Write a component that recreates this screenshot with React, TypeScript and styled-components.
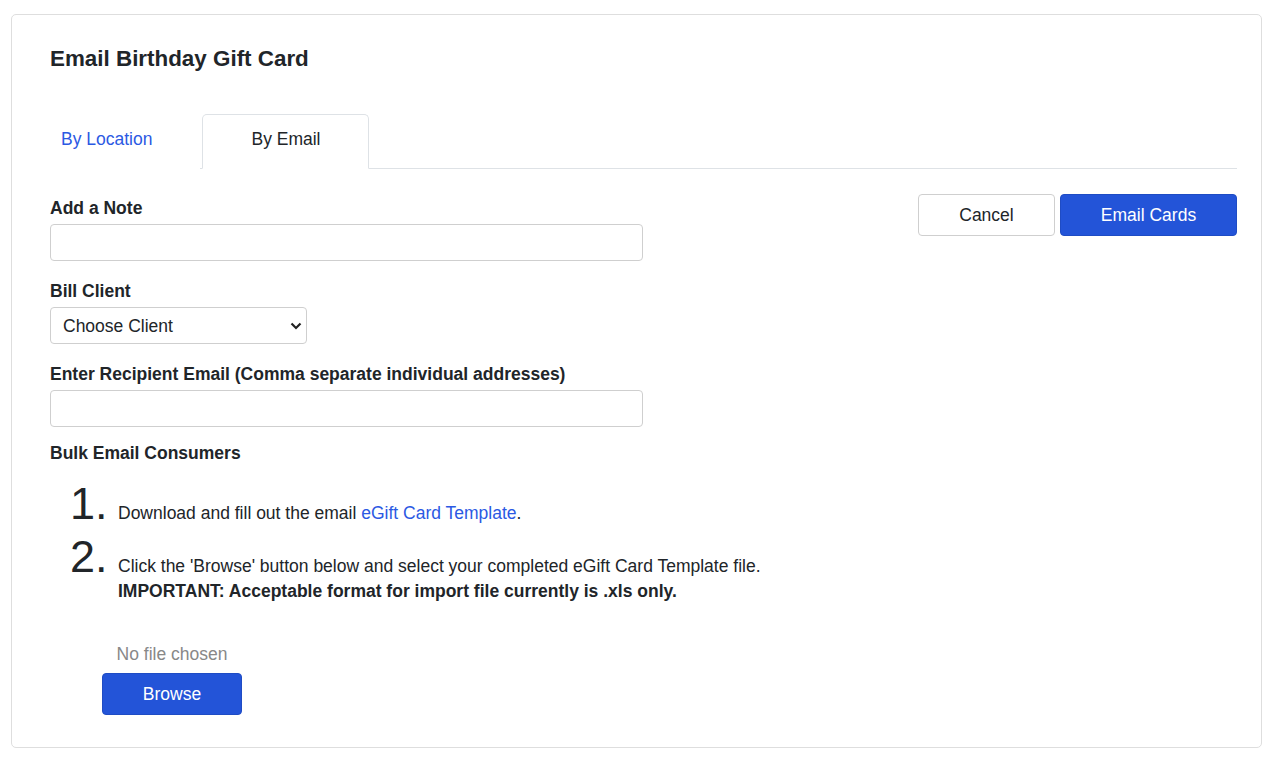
import React from "react";
import styled, { createGlobalStyle } from "styled-components";

const GlobalStyle = createGlobalStyle`
  html, body { margin: 0; padding: 0; background: #ffffff; }
  body {
    font-family: "Liberation Sans", Arial, sans-serif;
    font-size: 17.5px;
    color: #212529;
  }
  * { box-sizing: border-box; }
`;

const Page = styled.div`
  padding: 14px 22px 13px 11px;
`;

const Card = styled.section`
  border: 1px solid #dedede;
  border-radius: 5px;
  padding: 30px 24px 32px 20px;
  background: #fff;
`;

const Title = styled.h1`
  margin: 0 0 0 18px;
  font-size: 22.4px;
  line-height: 27px;
  font-weight: 700;
  color: #212529;
`;

const TabList = styled.div`
  margin-top: 42px;
  display: flex;
  gap: 2px;
  border-bottom: 1px solid #dee2e6;
`;

const Tab = styled.button<{ $active?: boolean }>`
  font-family: inherit;
  font-size: 17.5px;
  line-height: 48px;
  padding: 0 47px 5px 48px;
  margin-bottom: -1px;
  background: #fff;
  cursor: pointer;
  color: ${(p) => (p.$active ? "#212529" : "#2b59e3")};
  border: 1px solid ${(p) => (p.$active ? "#dee2e6" : "transparent")};
  border-bottom-color: ${(p) => (p.$active ? "#fff" : "transparent")};
  border-radius: 5px 5px 0 0;
  &:first-child { margin-left: -20px; }
`;

const Content = styled.div`
  display: flex;
  align-items: flex-start;
  padding: 25px 0 0 18px;
`;

const Form = styled.div`
  width: 593px;
  padding-top: 3px;
`;

const Actions = styled.div`
  margin-left: auto;
  display: flex;
  gap: 5px;
`;

const Button = styled.button<{ $variant?: "primary" | "default" }>`
  font-family: inherit;
  font-size: 17.5px;
  height: 42px;
  border-radius: 4px;
  cursor: pointer;
  padding: 0;
  background: ${(p) => (p.$variant === "primary" ? "#2354d8" : "#fff")};
  color: ${(p) => (p.$variant === "primary" ? "#fff" : "#212529")};
  border: 1px solid ${(p) => (p.$variant === "primary" ? "#1f4cc4" : "#cfcfcf")};
`;

const Field = styled.div`
  margin-bottom: 19px;
`;

const Label = styled.label`
  display: block;
  font-weight: 700;
  font-size: 17.5px;
  line-height: 22px;
  margin-bottom: 5px;
`;

const TextInput = styled.input`
  display: block;
  width: 593px;
  height: 37px;
  border: 1px solid #cfcfcf;
  border-radius: 4px;
  font-family: inherit;
  font-size: 17.5px;
  padding: 0 12px;
`;

const SelectWrap = styled.div`
  position: relative;
  width: 257px;
`;

const Select = styled.select`
  display: block;
  width: 257px;
  height: 37px;
  appearance: none;
  border: 1px solid #cfcfcf;
  border-radius: 4px;
  background: #fff;
  font-family: inherit;
  font-size: 17.5px;
  color: #212529;
  padding: 0 30px 0 12px;
`;

const Chevron = styled.svg`
  position: absolute;
  right: 5px;
  top: 15px;
  pointer-events: none;
`;

const SectionHeading = styled.div`
  font-weight: 700;
  font-size: 17.5px;
  line-height: 22px;
  margin-top: -4px;
`;

const Steps = styled.ol`
  list-style: none;
  margin: 17px 0 0;
  padding: 0 0 0 20px;
  width: 900px;
`;

const Step = styled.li`
  display: flex;
  align-items: baseline;
  margin-bottom: 8px;
`;

const StepNumber = styled.span`
  font-size: 45px;
  line-height: 45px;
  width: 48px;
  flex: none;
  color: #212529;
`;

const StepText = styled.div`
  font-size: 17.5px;
  line-height: 25px;
`;

const Link = styled.a`
  color: #2b59e3;
  text-decoration: none;
`;

const Strong = styled.strong`
  display: block;
  font-weight: 700;
`;

const FileBlock = styled.div`
  margin: 39px 0 0 52px;
  width: 140px;
  display: flex;
  flex-direction: column;
  align-items: center;
  gap: 8px;
`;

const FileName = styled.span`
  color: #888;
  font-size: 17.5px;
  line-height: 22px;
  white-space: nowrap;
`;

const BrowseButton = styled(Button)`
  width: 140px;
`;

export default function App() {
  return (
    <>
      <GlobalStyle />
      <Page>
        <Card>
          <Title>Email Birthday Gift Card</Title>
          <TabList>
            <Tab>By Location</Tab>
            <Tab $active>By Email</Tab>
          </TabList>
          <Content>
            <Form>
              <Field>
                <Label>Add a Note</Label>
                <TextInput type="text" />
              </Field>
              <Field>
                <Label>Bill Client</Label>
                <SelectWrap>
                  <Select defaultValue="">
                    <option value="">Choose Client</option>
                  </Select>
                  <Chevron width="12" height="8" viewBox="0 0 12 8">
                    <path d="M1.5 1.5 L6 6 L10.5 1.5" fill="none" stroke="#222" strokeWidth="2.2" />
                  </Chevron>
                </SelectWrap>
              </Field>
              <Field>
                <Label>Enter Recipient Email (Comma separate individual addresses)</Label>
                <TextInput type="text" />
              </Field>
              <SectionHeading>Bulk Email Consumers</SectionHeading>
              <Steps>
                <Step>
                  <StepNumber>1.</StepNumber>
                  <StepText>
                    Download and fill out the email <Link href="#">eGift Card Template</Link>.
                  </StepText>
                </Step>
                <Step>
                  <StepNumber>2.</StepNumber>
                  <StepText>
                    Click the 'Browse' button below and select your completed eGift Card Template file.
                    <Strong>IMPORTANT: Acceptable format for import file currently is .xls only.</Strong>
                  </StepText>
                </Step>
              </Steps>
              <FileBlock>
                <FileName>No file chosen</FileName>
                <BrowseButton $variant="primary">Browse</BrowseButton>
              </FileBlock>
            </Form>
            <Actions>
              <Button style={{ width: 137 }}>Cancel</Button>
              <Button $variant="primary" style={{ width: 177 }}>Email Cards</Button>
            </Actions>
          </Content>
        </Card>
      </Page>
    </>
  );
}
